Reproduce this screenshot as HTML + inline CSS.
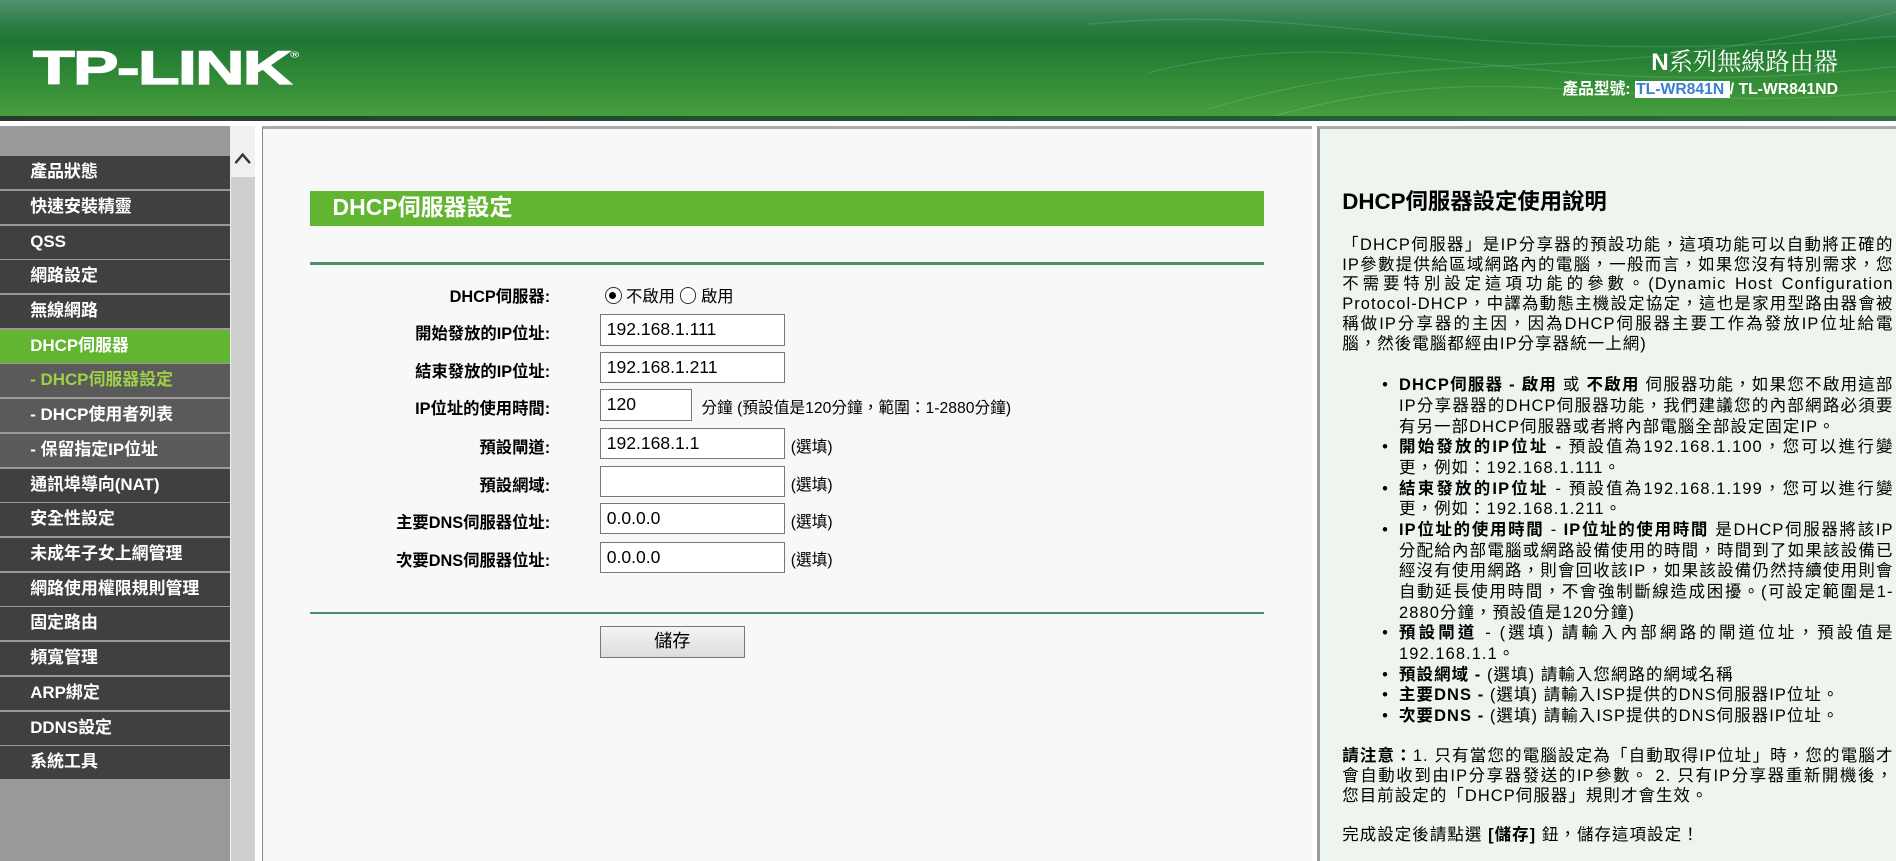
<!DOCTYPE html>
<html><head><meta charset="utf-8"><style>
*{margin:0;padding:0;box-sizing:border-box}
html,body{width:1896px;height:861px;overflow:hidden;background:#fff}
#w{position:absolute;left:0;top:0;width:1568px;height:712px;zoom:1.20918;font-family:"Liberation Sans","Noto Sans CJK TC",sans-serif;overflow:hidden}
.a{position:absolute}
#hd{left:0;top:0;width:1568px;height:97px;background:linear-gradient(#4f9170 0,#2a7d42 22px,#1f7733 35px,#3b9438 80px,#47a03e 97px)}
#hs{left:0;top:96px;width:1568px;height:4px;background:linear-gradient(90deg,#2a3a30,#1d5a35 60%,#2f6a40)}
#logo{left:27px;top:33px;color:#fff;font:bold 39px "Liberation Sans",sans-serif;letter-spacing:-1px;transform:scaleX(1.45);transform-origin:left;white-space:nowrap;-webkit-text-stroke:1px #fff}
#t1{right:48px;top:35px;color:#fff;font-size:20px;font-family:"Liberation Serif","Noto Serif CJK SC",serif}
#t2{right:48px;top:63px;color:#fff;font-size:13px;font-weight:bold}
#t2 span{background:#fff;color:#3b7fd4;padding:0 1px}
#gl{left:0;top:100px;width:1568px;height:4px;background:#fff}
#menu{left:0;top:104px;width:190px;height:608px;background:#999}
.mi{position:absolute;left:0;width:190px;height:27px;background:#404040;color:#fff;font-size:14px;font-weight:bold;line-height:27px;padding-left:25px}
.mi.s{background:#5a5a5a;padding-left:25px}
.mi.act{background:#62b531}
.mi.cur{color:#9fd048}
#sb{left:190px;top:104px;width:21px;height:608px;background:#cfcfcf;border-left:1px solid #eee}
#sbt{left:191px;top:104px;width:20px;height:42px;background:#f0f0f0}
#main{left:217px;top:104px;width:868px;height:608px;background:#f8f8f8;border-left:1px solid #888;border-top:3px solid #aaa}
#ttl{left:256px;top:158px;width:789px;height:29px;background:#62b531;color:#fff;font-size:19px;line-height:28px;padding-left:19px;font-weight:bold}
.hr{left:256px;width:789px;height:2px;background:#4d8f6a}
.lb{position:absolute;right:1113px;font-size:13.5px;font-weight:bold;color:#000;text-align:right;white-space:nowrap}
.in{position:absolute;left:496px;width:153px;height:26px;border:1px solid #777;background:#fff;font-size:14.5px;padding-left:5px;line-height:24px}
.op{position:absolute;left:654px;font-size:13px}
#btn{left:496px;top:518px;width:120px;height:26px;border:1px solid #777;background:linear-gradient(#f4f4f4,#ddd);text-align:center;font-size:15px;line-height:24px}
#help{left:1089px;top:104px;width:479px;height:608px;background:#eef4ee;border-left:3px solid #999;border-top:3px solid #aaa}
#hc{left:1110px;top:155px;width:456px;font-size:13.6px;line-height:16.4px;color:#000;text-align:justify;letter-spacing:0.9px}
#hc h2{font-size:18.5px;margin:4px 0 12px;height:24px;letter-spacing:0}
#hc ul{margin:17px 0 17px 47px;list-style:none}
#hc li{position:relative;line-height:17.1px}
#hc li:before{content:"•";position:absolute;left:-14px}
.radio{display:inline-block;width:14px;height:14px;border:1px solid #333;border-radius:50%;vertical-align:-2px;position:relative;background:#fff}
.radio.on:after{content:"";position:absolute;left:3px;top:3px;width:6px;height:6px;border-radius:50%;background:#000}
</style></head><body><div id="w">
<div class="a" id="hd"></div>
<svg class="a" style="left:900px;top:0" width="668" height="97"><g fill="none" stroke="#fff" stroke-opacity=".13"><path d="M0,20 C200,0 300,60 668,30"/><path d="M50,60 C250,10 350,90 668,55"/><path d="M100,90 C300,30 400,80 668,10"/><path d="M150,97 C350,40 450,100 668,75"/></g></svg>
<div class="a" id="hs"></div>
<div class="a" id="logo">TP-LINK<sup style="font-size:7px;vertical-align:22px;-webkit-text-stroke:0">®</sup></div>
<div class="a" id="t1"><b style="font-family:'Liberation Sans',sans-serif">N</b>系列無線路由器</div>
<div class="a" id="t2">產品型號: <span>TL-WR841N </span>/ TL-WR841ND</div>
<div class="a" id="gl"></div>
<div class="a" id="menu">
<div class="mi" style="top:25px">產品狀態</div>
<div class="mi" style="top:54px">快速安裝精靈</div>
<div class="mi" style="top:83px">QSS</div>
<div class="mi" style="top:111px">網路設定</div>
<div class="mi" style="top:140px">無線網路</div>
<div class="mi act" style="top:169px">DHCP伺服器</div>
<div class="mi s cur" style="top:197px">- DHCP伺服器設定</div>
<div class="mi s" style="top:226px">- DHCP使用者列表</div>
<div class="mi s" style="top:255px">- 保留指定IP位址</div>
<div class="mi" style="top:284px">通訊埠導向(NAT)</div>
<div class="mi" style="top:312px">安全性設定</div>
<div class="mi" style="top:341px">未成年子女上網管理</div>
<div class="mi" style="top:370px">網路使用權限規則管理</div>
<div class="mi" style="top:398px">固定路由</div>
<div class="mi" style="top:427px">頻寬管理</div>
<div class="mi" style="top:456px">ARP綁定</div>
<div class="mi" style="top:485px">DDNS設定</div>
<div class="mi" style="top:513px">系統工具</div>
</div>
<div class="a" id="sb"></div><div class="a" id="sbt"></div>
<svg class="a" style="left:193px;top:125px" width="16" height="12"><path d="M2,10 L8,3 L14,10" fill="none" stroke="#333" stroke-width="2"/></svg>
<div class="a" id="main"></div>
<div class="a" id="ttl">DHCP伺服器設定</div>
<div class="a hr" style="top:217px"></div>
<div class="a hr" style="top:506px"></div>
<div class="lb" style="top:234px">DHCP伺服器:</div>
<div class="a" style="left:500px;top:234px;font-size:13.5px"><span class="radio on"></span> 不啟用 <span class="radio"></span> 啟用</div>
<div class="lb" style="top:265px">開始發放的IP位址:</div><div class="in" style="top:260px">192.168.1.111</div>
<div class="lb" style="top:296px">結束發放的IP位址:</div><div class="in" style="top:291px">192.168.1.211</div>
<div class="lb" style="top:327px">IP位址的使用時間:</div><div class="in" style="top:322px;width:76px">120</div>
<div class="op" style="left:580px;top:327px">分鐘 (預設值是120分鐘，範圍：1-2880分鐘)</div>
<div class="lb" style="top:359px">預設閘道:</div><div class="in" style="top:354px">192.168.1.1</div><div class="op" style="top:359px">(選填)</div>
<div class="lb" style="top:390px">預設網域:</div><div class="in" style="top:385px"></div><div class="op" style="top:390px">(選填)</div>
<div class="lb" style="top:421px">主要DNS伺服器位址:</div><div class="in" style="top:416px">0.0.0.0</div><div class="op" style="top:421px">(選填)</div>
<div class="lb" style="top:452px">次要DNS伺服器位址:</div><div class="in" style="top:448px">0.0.0.0</div><div class="op" style="top:452px">(選填)</div>
<div class="a" id="btn">儲存</div>
<div class="a" id="help"></div>
<div class="a" id="hc">
<h2>DHCP伺服器設定使用說明</h2>
<p>「DHCP伺服器」是IP分享器的預設功能，這項功能可以自動將正確的IP參數提供給區域網路內的電腦，一般而言，如果您沒有特別需求，您不需要特別設定這項功能的參數。(Dynamic Host Configuration Protocol-DHCP，中譯為動態主機設定協定，這也是家用型路由器會被稱做IP分享器的主因，因為DHCP伺服器主要工作為發放IP位址給電腦，然後電腦都經由IP分享器統一上網)</p>
<ul>
<li><b>DHCP伺服器 - 啟用</b> 或 <b>不啟用</b> 伺服器功能，如果您不啟用這部IP分享器器的DHCP伺服器功能，我們建議您的內部網路必須要有另一部DHCP伺服器或者將內部電腦全部設定固定IP。</li>
<li><b>開始發放的IP位址 -</b> 預設值為192.168.1.100，您可以進行變更，例如：192.168.1.111。</li>
<li><b>結束發放的IP位址</b> - 預設值為192.168.1.199，您可以進行變更，例如：192.168.1.211。</li>
<li><b>IP位址的使用時間</b> - <b>IP位址的使用時間</b> 是DHCP伺服器將該IP分配給內部電腦或網路設備使用的時間，時間到了如果該設備已經沒有使用網路，則會回收該IP，如果該設備仍然持續使用則會自動延長使用時間，不會強制斷線造成困擾。(可設定範圍是1-2880分鐘，預設值是120分鐘)</li>
<li><b>預設閘道</b> - (選填) 請輸入內部網路的閘道位址，預設值是192.168.1.1。</li>
<li><b>預設網域 -</b> (選填) 請輸入您網路的網域名稱</li>
<li><b>主要DNS -</b> (選填) 請輸入ISP提供的DNS伺服器IP位址。</li>
<li><b>次要DNS -</b> (選填) 請輸入ISP提供的DNS伺服器IP位址。</li>
</ul>
<p><b>請注意：</b>1. 只有當您的電腦設定為「自動取得IP位址」時，您的電腦才會自動收到由IP分享器發送的IP參數。 2. 只有IP分享器重新開機後，您目前設定的「DHCP伺服器」規則才會生效。</p>
<p style="margin-top:16px">完成設定後請點選 <b>[儲存]</b> 鈕，儲存這項設定！</p>
</div>
</div></body></html>
